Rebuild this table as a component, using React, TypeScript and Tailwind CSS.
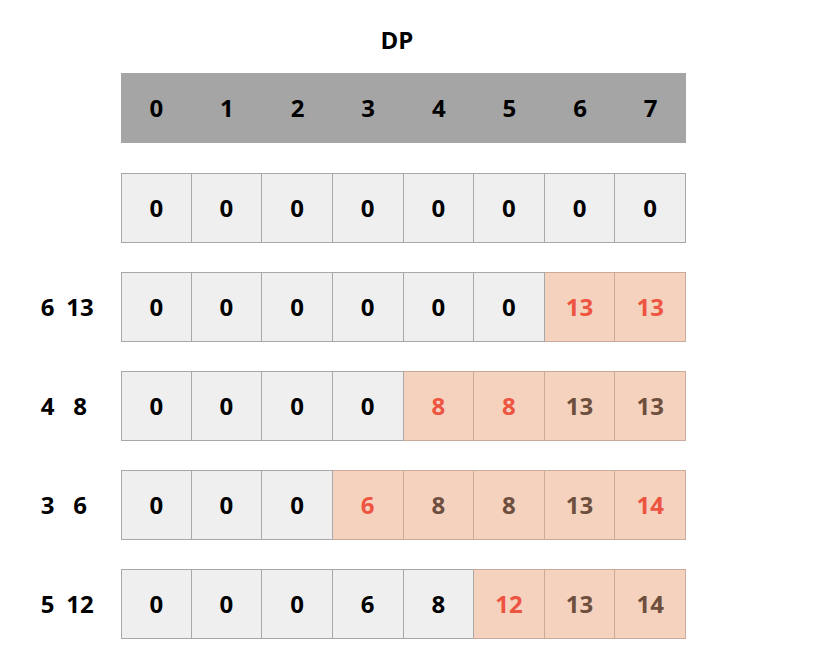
type Cell = { v: number; hl?: "r" | "b" };

const header = [0, 1, 2, 3, 4, 5, 6, 7];

const rows: { label?: [string, string]; cells: Cell[] }[] = [
  { cells: [0, 0, 0, 0, 0, 0, 0, 0].map((v) => ({ v })) },
  {
    label: ["6", "13"],
    cells: [{ v: 0 }, { v: 0 }, { v: 0 }, { v: 0 }, { v: 0 }, { v: 0 }, { v: 13, hl: "r" }, { v: 13, hl: "r" }],
  },
  {
    label: ["4", "8"],
    cells: [{ v: 0 }, { v: 0 }, { v: 0 }, { v: 0 }, { v: 8, hl: "r" }, { v: 8, hl: "r" }, { v: 13, hl: "b" }, { v: 13, hl: "b" }],
  },
  {
    label: ["3", "6"],
    cells: [{ v: 0 }, { v: 0 }, { v: 0 }, { v: 6, hl: "r" }, { v: 8, hl: "b" }, { v: 8, hl: "b" }, { v: 13, hl: "b" }, { v: 14, hl: "r" }],
  },
  {
    label: ["5", "12"],
    cells: [{ v: 0 }, { v: 0 }, { v: 0 }, { v: 6 }, { v: 8 }, { v: 12, hl: "r" }, { v: 13, hl: "b" }, { v: 14, hl: "b" }],
  },
];

const DPCell = ({ cell, first }: { cell: Cell; first: boolean }) => {
  const orange = cell.hl !== undefined;
  return (
    <div
      className={
        "flex items-center justify-center border-y border-r " +
        (first ? "border-l " : "") +
        (orange ? "bg-[#f4d2bd] border-[#c9ab9b] " : "bg-[#efefef] border-[#a8a8a8] ") +
        (cell.hl === "r" ? "text-[#ee5442]" : cell.hl === "b" ? "text-[#6e4f3e]" : "text-black")
      }
    >
      {cell.v}
    </div>
  );
};

export default function App() {
  return (
    <div className="w-[815px] h-[659px] bg-white font-['Open_Sans',sans-serif] font-bold text-[24px] text-black">
      <div className="pt-[24px] ml-[121px] w-[552px] h-[56px] leading-[32px] text-center">DP</div>

      <div className="mt-[17px] ml-[121px] w-[565px] h-[70px] bg-[#a5a5a5] grid grid-cols-8">
        {header.map((h) => (
          <div key={h} className="flex items-center justify-center">
            {h}
          </div>
        ))}
      </div>

      <div className="mt-[30px] flex flex-col gap-[29px]">
        {rows.map((row, i) => (
          <div key={i} className="flex h-[70px]">
            <div className="w-[121px] flex items-center pl-[38px]">
              {row.label && (
                <>
                  <span className="w-[19px] text-center">{row.label[0]}</span>
                  <span className="ml-[8px] w-[30px] text-center">{row.label[1]}</span>
                </>
              )}
            </div>
            <div className="w-[565px] grid grid-cols-8">
              {row.cells.map((c, j) => (
                <DPCell key={j} cell={c} first={j === 0} />
              ))}
            </div>
          </div>
        ))}
      </div>
    </div>
  );
}
